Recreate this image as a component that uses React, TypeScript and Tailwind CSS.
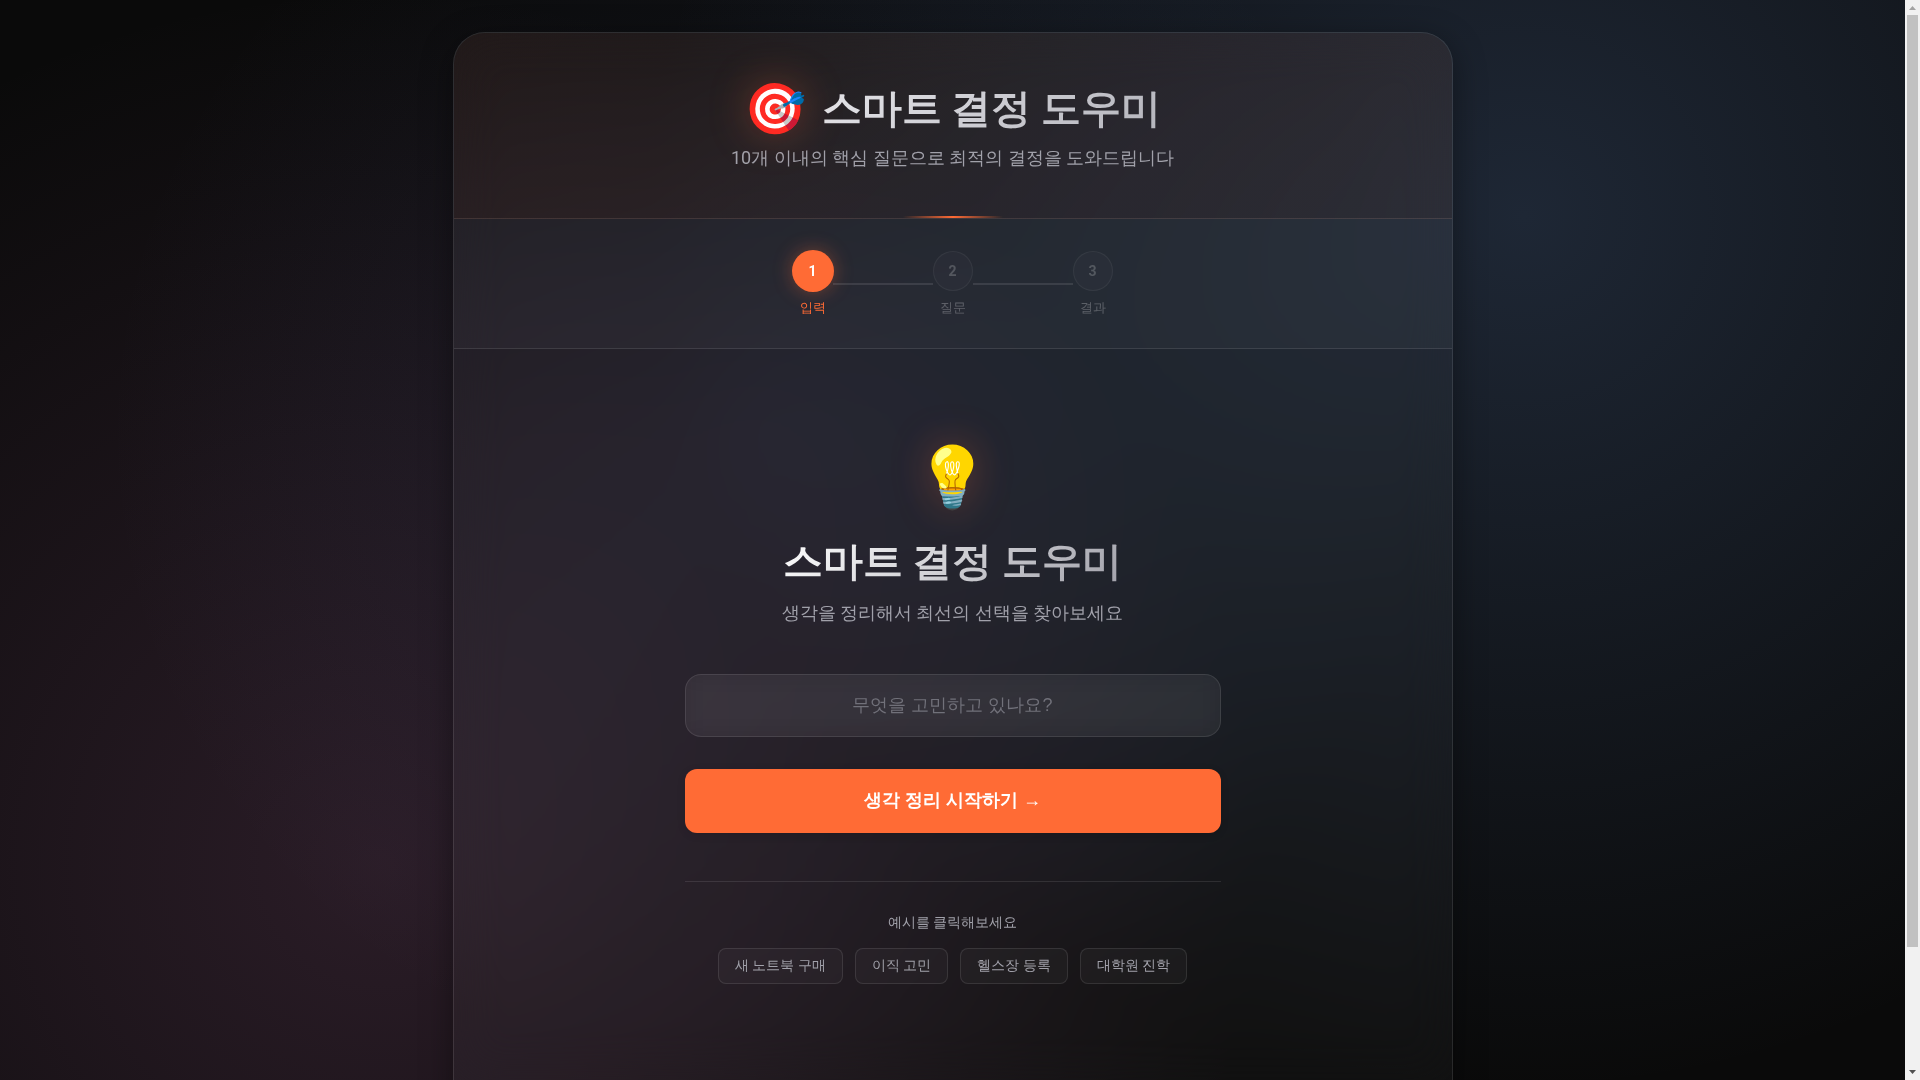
import { useState } from "react";

const steps = [
  { id: 1, label: "입력" },
  { id: 2, label: "질문" },
  { id: 3, label: "결과" },
];

const examples = ["새 노트북 구매", "이직 고민", "헬스장 등록", "대학원 진학"];

function StepItem({ id, label, active = false }: { id: number; label: string; active?: boolean }) {
  return (
    <li className="flex w-10 flex-col items-center gap-2" aria-current={active ? "step" : undefined}>
      <div
        className={
          active
            ? "flex size-10 items-center justify-center rounded-full bg-[#ff6b35] text-sm font-bold text-white shadow-[0_0_20px_rgba(255,107,53,0.4)] ring-1 ring-[#ff6b35]"
            : "flex size-10 items-center justify-center rounded-full border border-white/5 bg-white/[0.02] text-sm font-bold text-white/20"
        }
      >
        {id}
      </div>
      <span className={`text-[13px] leading-[17px] whitespace-nowrap ${active ? "text-[#ff6b35]" : "text-white/25"}`}>
        {label}
      </span>
    </li>
  );
}

function StepLine() {
  return <li aria-hidden="true" className="h-0.5 w-25 bg-white/10" />;
}

function Header() {
  return (
    <header className="relative border-b border-[#ffd0c0]/12 bg-linear-135 from-[#ff6b35]/5 to-[#ff6b35]/4 px-8 py-12 text-center">
      <h1 className="flex items-center justify-center gap-4 text-[40px] leading-[56px] font-bold">
        <span className="text-[50px] leading-[56px] drop-shadow-[0_0_20px_rgba(255,107,53,0.3)]">🎯</span>
        <span className="bg-linear-135 from-[#e5e5e9] to-[#b4b4bc] bg-clip-text text-transparent">스마트 결정 도우미</span>
      </h1>
      <p className="mt-2 text-lg leading-[25px] text-[#a1a1aa]">10개 이내의 핵심 질문으로 최적의 결정을 도와드립니다</p>
      <div className="absolute bottom-0 left-1/2 h-0.5 w-25 -translate-x-1/2 bg-linear-to-r from-transparent via-[#ff6b35] to-transparent" />
    </header>
  );
}

function Progress() {
  return (
    <ol className="flex items-center justify-center border-b border-white/10 bg-white/[0.03] py-8">
      <StepItem {...steps[0]} active />
      <StepLine />
      <StepItem {...steps[1]} />
      <StepLine />
      <StepItem {...steps[2]} />
    </ol>
  );
}

function ScrollRail() {
  return (
    <div aria-hidden="true" className="flex w-[15px] shrink-0 flex-col bg-[#f1f1f1]">
      <svg viewBox="0 0 15 15" className="size-[15px] fill-[#a3a3a3]">
        <path d="M4 10h7L7.500 6z" />
      </svg>
      <div className="flex-1 px-0.5">
        <div className="h-[88.8%] bg-[#c1c1c1]" />
      </div>
      <svg viewBox="0 0 15 15" className="size-[15px] fill-[#505050]">
        <path d="M4 5h7L7.500 9z" />
      </svg>
    </div>
  );
}

export default function App() {
  const [topic, setTopic] = useState("");

  return (
    <div className="flex h-screen font-[Roboto,'Droid_Sans_Fallback',sans-serif] text-white">
      <div className="flex-1 overflow-y-auto bg-[#0a0a0a] bg-[radial-gradient(circle_at_20%_80%,rgba(172,102,155,0.2)_0%,transparent_50%),radial-gradient(circle_at_80%_20%,rgba(110,155,225,0.2)_0%,transparent_50%),radial-gradient(circle_at_40%_40%,rgba(110,140,220,0.1)_0%,transparent_50%)] p-8 [scrollbar-width:none]">
        <main className="mx-auto max-w-[1000px] overflow-hidden rounded-[32px] border border-white/10 bg-white/[0.03] shadow-[0_8px_32px_rgba(0,0,0,0.4)] backdrop-blur-xl">
          <Header />
          <Progress />
          <section className="mx-auto flex w-full max-w-[600px] flex-col items-center px-8 pt-20 pb-[200px] text-center">
            <div className="text-[60px] leading-[98px] drop-shadow-[0_0_20px_rgba(255,107,53,0.3)]">💡</div>
            <h2 className="mt-1.5 bg-linear-135 from-white to-[#a1a1aa] bg-clip-text text-[40px] leading-[57px] font-bold text-transparent">
              스마트 결정 도우미
            </h2>
            <p className="mt-2 text-lg leading-[30px] text-[#a1a1aa]">생각을 정리해서 최선의 선택을 찾아보세요</p>
            <form className="mt-[46px] flex w-full flex-col gap-8" onSubmit={(e) => e.preventDefault()}>
              <input
                type="text"
                aria-label="고민"
                value={topic}
                onChange={(e) => setTopic(e.target.value)}
                placeholder="무엇을 고민하고 있나요?"
                className="h-[63px] w-full rounded-2xl border border-white/10 bg-white/5 px-6 text-center font-['Liberation_Sans','Droid_Sans_Fallback',sans-serif] text-lg outline-none backdrop-blur-md placeholder:text-[#71717a]"
              />
              <button
                type="submit"
                className="h-16 w-full rounded-xl bg-[#ff6b35] pb-0.5 font-['Liberation_Sans','Droid_Sans_Fallback',sans-serif] text-lg font-semibold text-white shadow-[0_2px_8px_rgba(0,0,0,0.1)]"
              >
                생각 정리 시작하기 →
              </button>
            </form>
            <div className="mt-12 w-full border-t border-white/10 pt-8">
              <p className="text-sm leading-4 text-[#a1a1aa]">예시를 클릭해보세요</p>
              <div className="mt-[18px] flex flex-wrap justify-center gap-3">
                {examples.map((item) => (
                  <button
                    key={item}
                    type="button"
                    onClick={() => setTopic(item)}
                    className="h-9 rounded-lg border border-white/10 bg-white/[0.03] px-4 pb-0.5 text-sm text-[#a1a1aa]"
                  >
                    {item}
                  </button>
                ))}
              </div>
            </div>
          </section>
        </main>
      </div>
      <ScrollRail />
    </div>
  );
}
